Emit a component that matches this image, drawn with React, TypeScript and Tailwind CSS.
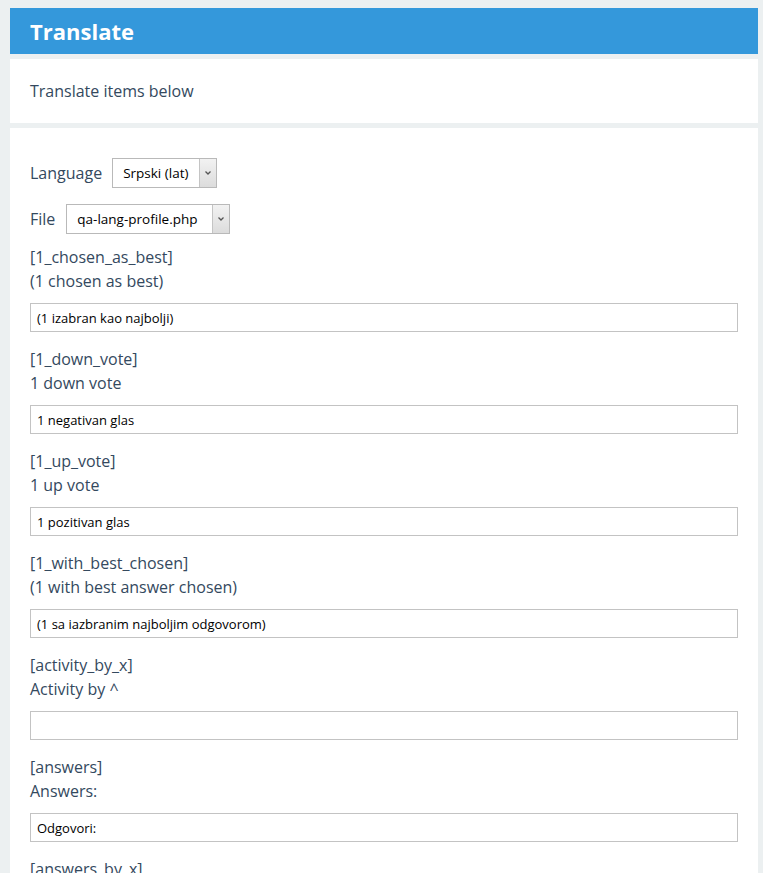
import { useState } from "react";

type Phrase = {
  key: string;
  source: string;
  value: string;
};

const phrases: Phrase[] = [
  { key: "1_chosen_as_best", source: "(1 chosen as best)", value: "(1 izabran kao najbolji)" },
  { key: "1_down_vote", source: "1 down vote", value: "1 negativan glas" },
  { key: "1_up_vote", source: "1 up vote", value: "1 pozitivan glas" },
  { key: "1_with_best_chosen", source: "(1 with best answer chosen)", value: "(1 sa iazbranim najboljim odgovorom)" },
  { key: "activity_by_x", source: "Activity by ^", value: "" },
  { key: "answers", source: "Answers:", value: "Odgovori:" },
  { key: "answers_by_x", source: "Answers by ^", value: "Odgovori od ^" },
  { key: "asked_by_x", source: "Asked by ^", value: "Pitao ^" },
];

function FakeSelect({ value, width }: { value: string; width: string }) {
  return (
    <div
      className={`flex h-[30px] items-stretch border border-[#b9b9b9] bg-white text-[13.5px] text-black ${width}`}
    >
      <div className="flex flex-1 items-center pl-[10px]">{value}</div>
      <div className="flex w-[17px] items-center justify-center border-l border-[#c4c4c4] bg-gradient-to-b from-[#f2f2f2] to-[#dcdcdc]">
        <svg width="8" height="6" viewBox="0 0 8 6" fill="none">
          <path d="M1.5 1.5 L4 4 L6.5 1.5" stroke="#555" strokeWidth="1.3" />
        </svg>
      </div>
    </div>
  );
}

function App() {
  const [values, setValues] = useState<string[]>(phrases.map((p) => p.value));

  return (
    <div
      className="min-h-screen bg-[#ecf0f1] pt-[8px] pl-[10px] pr-[5px] text-[16px] text-[#34495e]"
      style={{ fontFamily: '"Open Sans", "Noto Sans", sans-serif' }}
    >
      <div className="flex h-[46px] items-center bg-[#3498db] px-[20px]">
        <h1 className="text-[22px] font-bold text-white">Translate</h1>
      </div>

      <div className="mt-[5px] bg-white px-[20px] py-[20px] leading-[24px]">
        Translate items below
      </div>

      <div className="mt-[5px] bg-white px-[20px] pt-[30px] pb-[20px]">
        <div className="flex items-center gap-[10px]">
          <span>Language</span>
          <FakeSelect value="Srpski (lat)" width="w-[105px]" />
        </div>
        <div className="mt-[16px] flex items-center gap-[11px]">
          <span>File</span>
          <FakeSelect value="qa-lang-profile.php" width="w-[164px]" />
        </div>

        <div className="mt-[11px]">
          {phrases.map((p, i) => (
            <div key={p.key} className="mb-[15px] leading-[24px]">
              <div>[{p.key}]</div>
              <div>{p.source}</div>
              <input
                type="text"
                value={values[i]}
                onChange={(e) => {
                  const next = [...values];
                  next[i] = e.target.value;
                  setValues(next);
                }}
                className="mt-[10px] block h-[29px] w-full border border-[#c3c3c3] bg-white px-[6px] text-[13px] text-black outline-none"
              />
            </div>
          ))}
        </div>
      </div>
    </div>
  );
}

export default App;
